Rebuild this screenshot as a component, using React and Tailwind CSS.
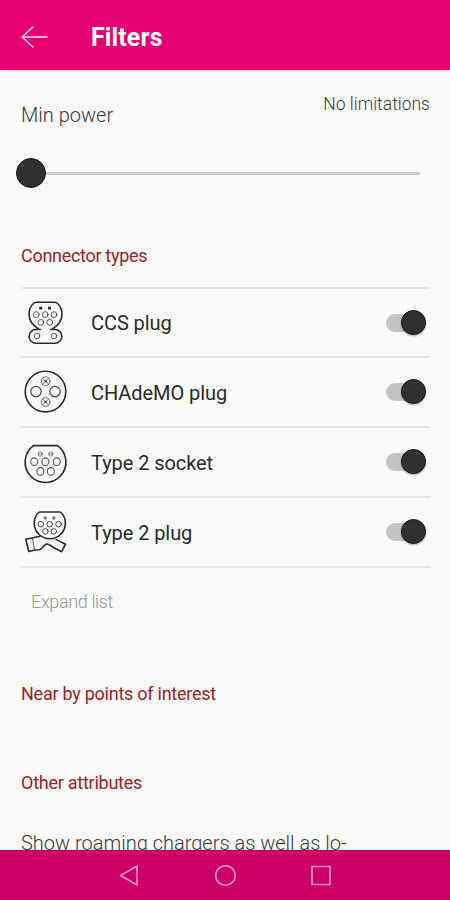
import React from "react";

const rings = (points, rx, ry = rx) =>
  points.map(([x, y]) => <ellipse key={`${x}-${y}`} cx={x} cy={y} rx={rx} ry={ry} />);

function IconFrame({ children }) {
  return (
    <svg viewBox="0 0 50 70" className="-ml-px -my-px h-[70px] w-[50px] shrink-0" fill="none" stroke="#2b2b2b" strokeLinejoin="round" strokeLinecap="round">
      {children}
    </svg>
  );
}

function CcsIcon() {
  return (
    <IconFrame>
      <path strokeWidth="1.6" d="M20.500 41.500H16a6.900 6.900 0 0 0 0 13.800h19a6.900 6.900 0 0 0 0-13.800h-4.500M18.500 41C13 37.500 9 32 9 26.500c0-5 2-9 5-11.500q1-.8 2.500-.8h18q1.500 0 2.500.8c3 2.500 5 6.500 5 11.500 0 5.500-4 11-9.500 14.500" />
      <g strokeWidth="1" stroke="#555">
        {rings([[16.3, 26.6], [25.2, 26.6], [34, 26.6], [20.8, 34.4], [29.8, 34.4]], 2.9)}
        {rings([[17, 48], [34, 48]], 2.8)}
      </g>
      <path stroke="none" fill="#2b2b2b" d="M19.200 18.700h3v2.800h-3zM28 18.700h3v2.800h-3z" />
    </IconFrame>
  );
}

function ChademoIcon() {
  return (
    <IconFrame>
      <circle cx="25.500" cy="34.600" r="20.300" strokeWidth="1.600" />
      <g strokeWidth="1.200" stroke="#444">
        {rings([[16, 34.6], [35, 34.6]], 5.2)}
      </g>
      <g strokeWidth=".9" stroke="#555">
        {rings([[25.6, 24.2], [25.6, 45]], 4.4)}
        <path d="m22.600 21.200 6 6m0-6-6 6M22.600 42l6 6m0-6-6 6" />
      </g>
      <path stroke="none" fill="#333" d="M24.600 23.200h2v2h-2zM24.600 44h2v2h-2z" />
    </IconFrame>
  );
}

function SocketIcon() {
  return (
    <IconFrame>
      <path strokeWidth="1.600" d="M13.500 18.600h24a20.400 20.400 0 1 1-24 0z" />
      <g strokeWidth="1.100" stroke="#555">
        {rings([[14.3, 34.7], [25.4, 34.7], [36.8, 34.7], [20.4, 44.4], [30.8, 44.4]], 3.5, 3.8)}
      </g>
      <g strokeWidth=".8" stroke="#666">
        {rings([[20.2, 27], [30.7, 27]], 2.2)}
        <path d="M18.500 27h3.400M29 27h3.400" />
      </g>
    </IconFrame>
  );
}

function PlugIcon() {
  return (
    <IconFrame>
      <path strokeWidth="1.600" d="M20 15h19.500q1.500 0 2.300 1.200a15.600 15.600 0 1 1-24 0Q18.500 15 20 15z" />
      <g strokeWidth="1" stroke="#444">
        {rings([[20.8, 27.2], [29.7, 27.2], [38.5, 27.2], [25.4, 34.4], [33.8, 34.4]], 2.8)}
      </g>
      <g stroke="none" fill="#777">{rings([[25.3, 21], [33.8, 21]], 1.7)}</g>
      <path strokeWidth="1.600" d="M19.800 39.500c-3 0-4.800 1-7.500 1.500l-6.500 1.300 3 12.200 6-1.500 4.500-.2c3-.8 4.200-4.800 7.200-5.800 3 0 5 2.500 8 4l7.200 3.700 3.800-7.500-9.500-4.800" />
      <path strokeWidth=".9" stroke="#555" d="m12.300 41 2.300 12" />
    </IconFrame>
  );
}

function Toggle() {
  return (
    <div className="relative mr-1 h-[26px] w-10 shrink-0">
      <div className="absolute left-0 top-[4px] h-[18px] w-[34px] rounded-full bg-[#c4c4c4]" />
      <div className="absolute right-0 top-0 size-[25px] rounded-full border border-[#161616] bg-[#303030] shadow-[0_1px_2px_rgba(0,0,0,0.35)]" />
    </div>
  );
}

const connectors = [
  { name: "CCS plug", Icon: CcsIcon },
  { name: "CHAdeMO plug", Icon: ChademoIcon },
  { name: "Type 2 socket", Icon: SocketIcon },
  { name: "Type 2 plug", Icon: PlugIcon },
];

export default function App() {
  return (
    <div className="flex h-[900px] w-[450px] flex-col overflow-hidden bg-[#fafafa] font-['Roboto',sans-serif] text-[#3a3a3a]">
      <header className="z-10 flex h-[70px] shrink-0 items-center bg-[#e50074] pb-px pl-[21px] text-white shadow-[0_1px_2px_rgba(0,0,0,0.15)]">
        <svg className="mt-[5px] h-6 w-7" viewBox="0 0 28 24" fill="none" stroke="#ffd9ec" strokeWidth="1.500" strokeLinecap="round" strokeLinejoin="round">
          <path d="M26 12H1M12 2 1 12l11 10" />
        </svg>
        <h1 className="ml-[42px] mt-[6px] text-[25px] font-bold leading-8 tracking-[0.1px]">Filters</h1>
      </header>

      <main className="flex min-h-0 flex-1 flex-col overflow-hidden px-[21px]">
        <div className="flex h-[68px] shrink-0 justify-between pt-[21px]">
          <span className="mt-3 text-[20px] font-light leading-6">Min power</span>
          <span className="-mr-px mt-px text-[17.500px] font-light leading-6">No limitations</span>
        </div>
        <div className="-ml-[5px] mr-[9px] mt-[20px] flex h-[30px] shrink-0 items-center">
          <div className="size-[30px] shrink-0 rounded-full border border-[#161616] bg-[#303030]" />
          <div className="h-[3px] flex-1 bg-[#cbcbcb]" />
        </div>

        <h2 className="mt-[56px] shrink-0 text-[18px] leading-6 tracking-[-0.3px] text-[#9c2226]">Connector types</h2>
        <div className="-mr-px mt-[19px] shrink-0 border-t-2 border-[#e6e6e6]">
          {connectors.map(({ name, Icon }, i) => (
            <div key={name} className={`flex items-center border-b-2 border-[#e6e6e6] ${i === 0 ? "h-[69px]" : "h-[70px]"}`}>
              <Icon />
              <span className="ml-[21px] flex-1 pt-px text-[20px] leading-7 tracking-[-0.07px] text-[#2a2a2a]">{name}</span>
              <Toggle />
            </div>
          ))}
        </div>
        <button className="ml-[10px] mt-[22px] shrink-0 self-start text-[18px] font-light leading-6 tracking-[-0.36px] text-[#999]">Expand list</button>
        <h2 className="mt-[68px] shrink-0 text-[18px] leading-6 tracking-[-0.25px] text-[#9c2226]">Near by points of interest</h2>
        <h2 className="mt-[65px] shrink-0 text-[18px] leading-6 tracking-[-0.25px] text-[#9c2226]">Other attributes</h2>
        <p className="mt-[36px] shrink-0 whitespace-nowrap text-[20px] font-light leading-6">Show roaming chargers as well as lo-</p>
      </main>

      <nav className="flex h-[50px] shrink-0 items-center border-t border-[#b60060] bg-[#cc0067]">
        <svg className="h-[50px] w-[450px]" viewBox="0 0 450 50" fill="none" stroke="#e898c4" strokeWidth="1.600" strokeLinejoin="round">
          <path d="M137 15v19L120.500 24.500z" />
          <circle cx="225.500" cy="24.500" r="9.800" />
          <path d="M312 15.500h18v18h-18z" />
        </svg>
      </nav>
    </div>
  );
}
